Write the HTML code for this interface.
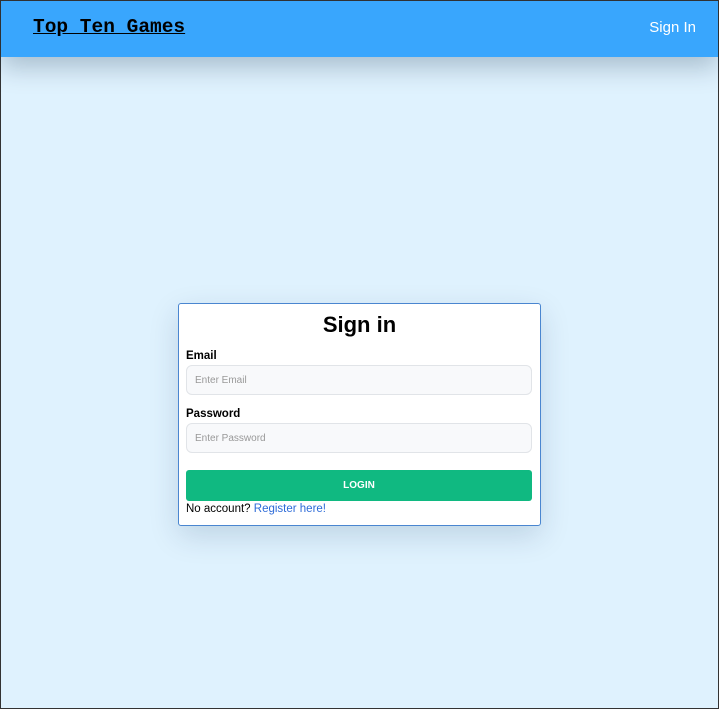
<!DOCTYPE html>
<html><head><style>
html,body{margin:0;padding:0}
body{width:719px;height:709px;box-sizing:border-box;border:1px solid #333;background:#dff2fe;font-family:"Liberation Sans",sans-serif;position:relative;overflow:hidden}
.hdr{position:absolute;left:0;top:0;right:0;height:56px;background:#39a6fd;box-shadow:0 10px 26px rgba(0,30,60,.25)}
.logo{position:absolute;left:32px;top:15px;font-family:"Liberation Mono",monospace;font-weight:bold;font-size:19.5px;color:#000;text-decoration:underline}
.si{position:absolute;right:22px;top:18px;color:#fff;font-size:15px}
.card{position:absolute;left:177px;top:302px;width:361px;height:221px;background:#fff;border:1px solid #4a86d0;border-radius:3px;box-shadow:0 10px 30px rgba(0,40,80,.15)}
h1{margin:0;position:absolute;top:8px;left:0;right:0;text-align:center;font-size:22px}
label{position:absolute;left:7px;font-size:11.5px;font-weight:bold}
.in{position:absolute;left:7px;width:346px;height:30px;box-sizing:border-box;background:#f8f9fb;border:1px solid #e1e4e8;border-radius:6px;font-size:10px;color:#999;padding:9px 0 0 8px}
.btn{position:absolute;left:7px;top:166px;width:346px;height:31px;background:#10b981;border-radius:3px;color:#fff;font-size:10px;font-weight:bold;text-align:center;line-height:31px}
.na{position:absolute;left:7px;top:199px;font-size:11.5px}
.na span{color:#2d6bd8}
</style></head><body>
<div class="hdr"><span class="logo">Top Ten Games</span><span class="si">Sign In</span></div>
<div class="card">
<h1>Sign in</h1>
<label style="top:46px">Email</label>
<div class="in" style="top:61px">Enter Email</div>
<label style="top:104px">Password</label>
<div class="in" style="top:119px">Enter Password</div>
<div class="btn">LOGIN</div>
<div class="na">No account? <span>Register here!</span></div>
</div>
</body></html>
